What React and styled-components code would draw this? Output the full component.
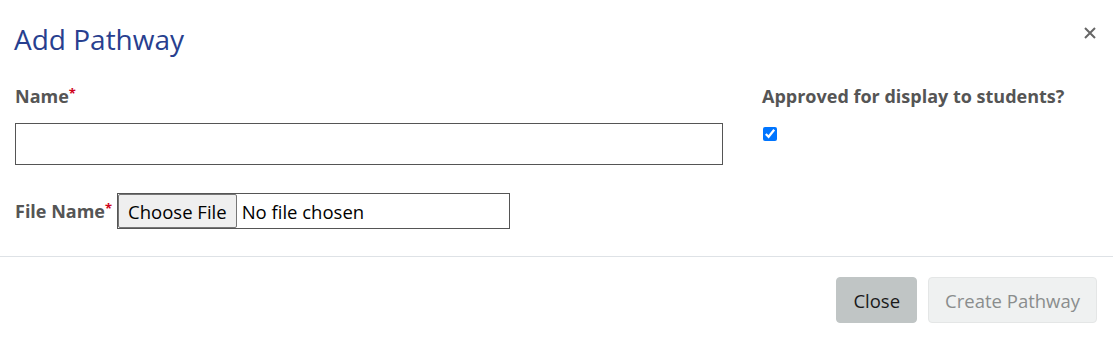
import React from 'react'
import styled, { createGlobalStyle } from 'styled-components'

const GlobalStyle = createGlobalStyle`
  body {
    margin: 0;
    background: #fff;
    font-family: "Open Sans", "Liberation Sans", sans-serif;
  }
`

const Modal = styled.div`
  width: 1113px;
  height: 354px;
  display: flex;
  flex-direction: column;
  background: #fff;
`

const Header = styled.div`
  display: flex;
  align-items: flex-start;
  justify-content: space-between;
  padding: 20px 16px 0 14px;
`

const Title = styled.h4`
  margin: 0;
  font-size: 28px;
  font-weight: 400;
  line-height: 38px;
  color: #283f8f;
`

const CloseX = styled.button`
  border: 0;
  background: none;
  padding: 0;
  margin-top: 6px;
  width: 14px;
  height: 14px;
  display: flex;
  align-items: center;
  justify-content: center;
  cursor: pointer;
`

const Body = styled.div`
  display: grid;
  grid-template-columns: 708px 1fr;
  column-gap: 39px;
  padding: 26px 15px 27px;
`

const Field = styled.div`
  display: flex;
  flex-direction: column;
`

const Label = styled.label`
  font-size: 18px;
  font-weight: 700;
  line-height: 24px;
  color: #555;
  margin-bottom: ${(p) => p.$gap || 0}px;
`

const Req = styled.span`
  color: #d0021b;
  font-size: 13px;
  vertical-align: top;
  line-height: 18px;
`

const TextInput = styled.input`
  box-sizing: border-box;
  height: 42px;
  width: 100%;
  border: 1px solid #555;
  border-radius: 0;
  padding: 6px 10px;
  font-size: 16px;
`

const FileRow = styled.div`
  display: flex;
  align-items: center;
  margin-top: 28px;
`

const FileInput = styled.input`
  box-sizing: border-box;
  width: 393px;
  height: 36px;
  border: 1px solid #555;
  font-family: "Open Sans", sans-serif;
  font-size: 18.5px;
  color: #000;
  padding: 0;
  margin-left: 5px;

  &::file-selector-button {
    height: 34px;
    margin: 0 5px 0 0;
    padding: 0 9px;
    border: 1px solid #767676;
    border-radius: 2px;
    background: #efefef;
    font-family: "Open Sans", sans-serif;
    font-size: 18.5px;
    color: #000;
  }
`

const Checkbox = styled.input`
  width: 14px;
  height: 14px;
  margin: 0 0 0 1px;
  accent-color: #0075ff;
`

const Footer = styled.div`
  display: flex;
  justify-content: flex-end;
  gap: 11px;
  border-top: 1px solid #dee2e6;
  padding: 20px 16px 0 15px;
`

const Button = styled.button`
  height: 46px;
  padding: 0 16px;
  border-radius: 4px;
  font-family: "Open Sans", "Liberation Sans", sans-serif;
  font-size: 18.5px;
  border: 1px solid ${(p) => (p.$muted ? '#e4e6e6' : '#c0c5c5')};
  background: ${(p) => (p.$muted ? '#eff1f1' : '#c0c5c5')};
  color: ${(p) => (p.$muted ? '#8a8d8d' : '#1a1a1a')};
  cursor: ${(p) => (p.$muted ? 'default' : 'pointer')};
`

export default function App() {
  return (
    <Modal>
      <GlobalStyle />
      <Header>
        <Title>Add Pathway</Title>
        <CloseX aria-label="Close">
          <svg width="12" height="12" viewBox="0 0 12 12">
            <path d="M1 1L11 11M11 1L1 11" stroke="#666" strokeWidth="2" />
          </svg>
        </CloseX>
      </Header>
      <Body>
        <Field>
          <Label $gap={15}>
            Name<Req>*</Req>
          </Label>
          <TextInput type="text" />
          <FileRow>
            <Label>
              File Name<Req>*</Req>
            </Label>
            <FileInput type="file" />
          </FileRow>
        </Field>
        <Field>
          <Label $gap={19}>Approved for display to students?</Label>
          <Checkbox type="checkbox" defaultChecked />
        </Field>
      </Body>
      <Footer>
        <Button>Close</Button>
        <Button $muted disabled>
          Create Pathway
        </Button>
      </Footer>
    </Modal>
  )
}
